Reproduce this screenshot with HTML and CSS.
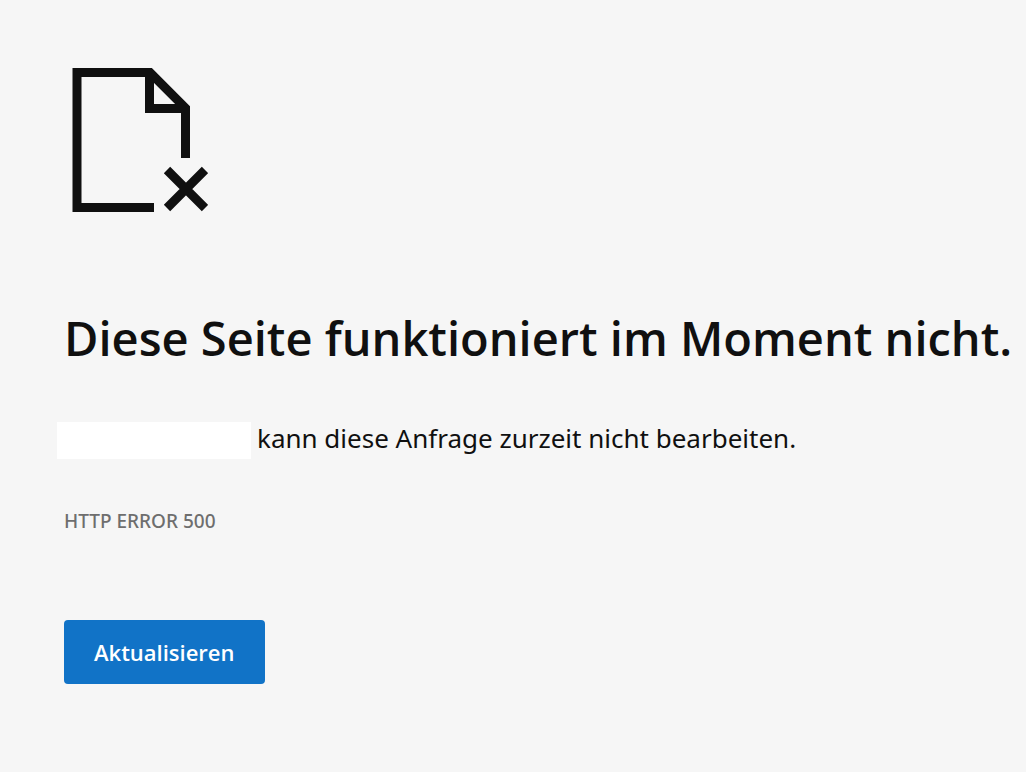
FILE: index.html
```html
<!DOCTYPE html>
<html lang="de">
<head>
    <meta charset="UTF-8">
    <meta name="viewport" content="width=device-width, initial-scale=1.0">
    <title>Diese Seite funktioniert im Moment nicht.</title>
    <link rel="stylesheet" href="styles.css">
</head>
<body>
    <main class="error-page">
        <svg class="error-icon" viewBox="0 0 144 144" aria-hidden="true">
            <path d="M90 139.500H13V4.500H86L121.500 40V90" />
            <path d="M85.500 4.500V40.500H121.500" />
            <path d="M103 102L141 140M141 102L103 140" />
        </svg>
        <h1>Diese Seite funktioniert im Moment nicht.</h1>
        <p class="message"><span class="host"></span>kann diese Anfrage zurzeit nicht bearbeiten.</p>
        <p class="error-code">HTTP ERROR 500</p>
        <button type="button" class="reload">Aktualisieren</button>
    </main>
</body>
</html>
```
FILE: styles.css
```css
body {
    margin: 0;
    background: #f6f6f6;
    color: #101010;
    font-family: "Segoe UI", "Open Sans", "Noto Sans", sans-serif;
}
.error-page {
    padding: 68px 0 80px 64px;
}
.error-icon {
    display: block;
    width: 144px;
    height: 144px;
    fill: none;
    stroke: #101010;
    stroke-width: 9;
}
h1 {
    margin: 94px 0 0;
    font-size: 47px;
    line-height: 64px;
    font-weight: 600;
    white-space: nowrap;
}
.message {
    display: flex;
    gap: 6px;
    margin: 52px 0 0 -7px;
    font-family: "Segoe UI", "Noto Sans", sans-serif;
    font-size: 26px;
    line-height: 32px;
}
.host {
    width: 194px;
    height: 37px;
    background: #fff;
}
.error-code {
    margin: 48px 0 0;
    color: #6e6e6e;
    font-family: "Segoe UI", "Noto Sans", sans-serif;
    font-size: 19px;
    line-height: 28px;
    font-weight: 500;
}
.reload {
    display: block;
    margin-top: 85px;
    padding: 0 30px;
    height: 64px;
    border: none;
    border-radius: 4px;
    background: #1173c7;
    color: #fff;
    font-family: inherit;
    font-size: 22px;
    font-weight: 600;
    cursor: pointer;
}
.reload:hover {
    background: #0e66b1;
}
```
